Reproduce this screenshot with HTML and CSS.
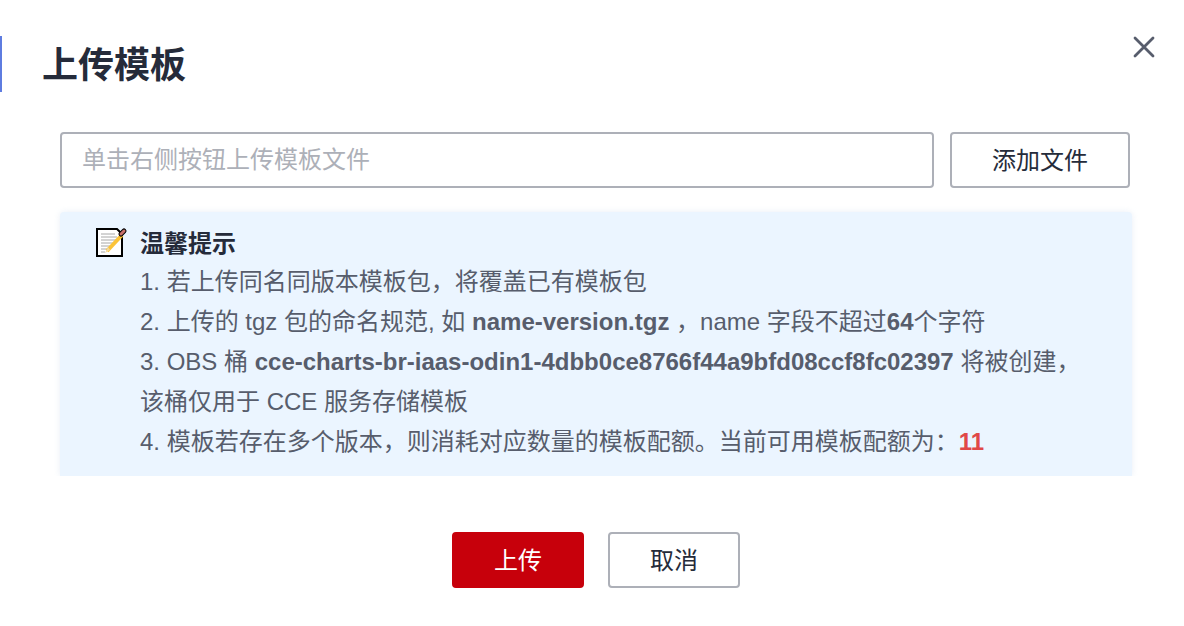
FILE: index.html
```html
<!DOCTYPE html>
<html lang="zh-CN">
<head>
    <meta charset="UTF-8">
    <title>上传模板</title>
    <link rel="stylesheet" href="styles.css">
</head>
<body>
    <div class="dialog">
        <div class="dialog-header">
            <h1 class="dialog-title">上传模板</h1>
            <svg class="dialog-close" width="24" height="24" viewBox="0 0 24 24">
                <path d="M3 3L21 21M21 3L3 21" fill="none" stroke="#575d6c" stroke-width="2.800" stroke-linecap="round"/>
            </svg>
        </div>

        <div class="upload-row">
            <div class="file-input">单击右侧按钮上传模板文件</div>
            <button type="button" class="btn btn-add">添加文件</button>
        </div>

        <div class="tips">
            <div class="tips-title">
                <svg class="tips-icon" width="34" height="34" viewBox="0 0 34 34">
                    <path d="M3 3H23L28 8V30H3Z" fill="#fff" stroke="#000" stroke-width="2"/>
                    <path d="M7 8H21M7 11H23M7 14H23M7 17H21M7 20H17M7 23H14M7 26H11" stroke="#a8a8a8" stroke-width="1"/>
                    <path d="M13 25L28 9" stroke="#fbc338" stroke-width="4"/>
                    <path d="M11 27L14 21L16 24Z" fill="#f2d9a0"/>
                    <path d="M27 8L30 5" stroke="#000" stroke-width="5" stroke-linecap="round"/>
                    <path d="M27 8L30 5" stroke="#c9706a" stroke-width="3" stroke-linecap="round"/>
                </svg>
                <span>温馨提示</span>
            </div>
            <p class="tips-line">1. 若上传同名同版本模板包，将覆盖已有模板包</p>
            <p class="tips-line">2. 上传的 tgz 包的命名规范, 如 <b>name-version.tgz</b> ，name 字段不超过<b>64</b>个字符</p>
            <p class="tips-line">3. OBS 桶 <b>cce-charts-br-iaas-odin1-4dbb0ce8766f44a9bfd08ccf8fc02397</b> 将被创建，该桶仅用于 CCE 服务存储模板</p>
            <p class="tips-line">4. 模板若存在多个版本，则消耗对应数量的模板配额。当前可用模板配额为：<b class="quota">11</b></p>
        </div>

        <div class="dialog-footer">
            <button type="button" class="btn btn-primary">上传</button>
            <button type="button" class="btn">取消</button>
        </div>
    </div>
</body>
</html>
```

FILE: styles.css
```css
* {
    box-sizing: border-box;
}
body {
    margin: 0;
    background-color: #fff;
    color: #252b3a;
    font-family: "Liberation Sans", "Noto Sans CJK SC", sans-serif;
}
.dialog {
    width: 1184px;
    height: 626px;
    padding-top: 36px;
    overflow: hidden;
}
.dialog-header {
    display: flex;
    justify-content: space-between;
    height: 56px;
    padding-left: 40px;
    padding-right: 28px;
    border-left: 2px solid #5e7ce0;
}
.dialog-title {
    margin: 0;
    font-size: 36px;
    line-height: 60px;
    font-weight: 700;
}
.dialog-close {
    margin-top: -1px;
}
.upload-row {
    display: flex;
    gap: 16px;
    margin: 40px 54px 0 60px;
}
.file-input {
    flex: 1;
    height: 56px;
    padding-left: 20px;
    border: 2px solid #adb0b8;
    border-radius: 4px;
    color: #adb0b8;
    font-size: 24px;
    line-height: 52px;
}
.btn {
    width: 132px;
    height: 56px;
    padding: 0 0 4px;
    background-color: #fff;
    border: 2px solid #adb0b8;
    border-radius: 4px;
    color: #252b3a;
    font-family: inherit;
    font-size: 24px;
}
.btn-add {
    width: 180px;
}
.btn-primary {
    background-color: #c7000b;
    border-color: #c7000b;
    color: #fff;
}
.tips {
    width: 1072px;
    height: 264px;
    margin: 24px 0 0 60px;
    padding: 12px 44px 0 80px;
    background-color: #ebf5ff;
    border-radius: 4px 4px 0 0;
    box-shadow: 0 0 6px rgba(200, 215, 235, 0.4);
    clip-path: inset(-6px -6px 0 -6px);
    color: #575d6c;
    font-size: 24px;
    line-height: 40px;
}
.tips-title {
    position: relative;
    height: 38px;
    color: #252b3a;
    font-weight: 700;
}
.tips-icon {
    position: absolute;
    left: -46px;
    top: 2px;
}
.tips-line {
    margin: 0;
}
.tips-line b {
    font-weight: 700;
}
.quota {
    color: #e04848;
}
.dialog-footer {
    display: flex;
    justify-content: center;
    gap: 24px;
    margin-top: 56px;
    padding-left: 8px;
}
```
